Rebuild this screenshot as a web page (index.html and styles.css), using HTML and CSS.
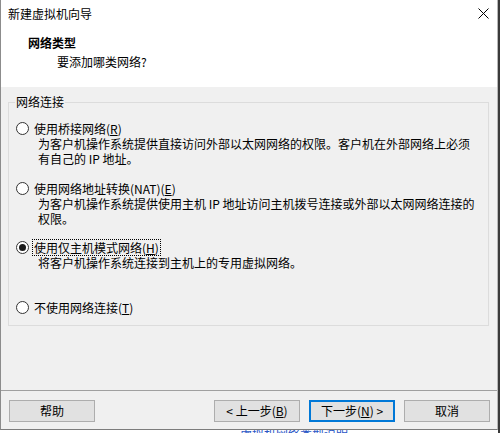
FILE: index.html
```html
<!DOCTYPE html>
<html lang="zh-CN">
<head>
<meta charset="utf-8">
<title>新建虚拟机向导</title>
<link rel="stylesheet" href="styles.css">
</head>
<body>
<div class="screen">
  <div class="main">
    <div class="window">
      <div class="titlebar">
        <span class="title">新建虚拟机向导</span>
        <svg class="close" width="11" height="11" viewBox="0 0 11 11"><path d="M0.5 0.5 L10.5 10.5 M10.5 0.5 L0.5 10.5" stroke="#000" stroke-width="1" fill="none"/></svg>
      </div>
      <div class="header">
        <div class="h-title">网络类型</div>
        <div class="h-sub">要添加哪类网络?</div>
      </div>
      <div class="content">
        <fieldset class="group">
          <legend>网络连接</legend>
          <div class="option opt1">
            <div class="opt-label"><span class="radio"></span><span class="text">使用桥接网络(<u>R</u>)</span></div>
            <div class="desc">为客户机操作系统提供直接访问外部以太网网络的权限。客户机在外部网络上必须<br>有自己的 IP 地址。</div>
          </div>
          <div class="option opt2">
            <div class="opt-label"><span class="radio"></span><span class="text">使用网络地址转换(NAT)(<u>E</u>)</span></div>
            <div class="desc">为客户机操作系统提供使用主机 IP 地址访问主机拨号连接或外部以太网网络连接的<br>权限。</div>
          </div>
          <div class="option opt3">
            <div class="opt-label"><span class="radio checked"></span><span class="text focused">使用仅主机模式网络(<u>H</u>)</span></div>
            <div class="desc">将客户机操作系统连接到主机上的专用虚拟网络。</div>
          </div>
          <div class="option opt4">
            <div class="opt-label"><span class="radio"></span><span class="text">不使用网络连接(<u>T</u>)</span></div>
          </div>
        </fieldset>
      </div>
      <div class="footer">
        <button class="btn">帮助</button>
        <div class="btn-group">
          <button class="btn">&lt; 上一步(<u>B</u>)</button>
          <button class="btn default">下一步(<u>N</u>) &gt;</button>
          <button class="btn">取消</button>
        </div>
      </div>
    </div>
    <div class="behind"><span class="link">虚拟机网络类型说明</span></div>
  </div>
  <div class="edge"></div>
</div>
</body>
</html>
```

FILE: styles.css
```css
* {
  box-sizing: border-box;
}

html, body {
  margin: 0;
  padding: 0;
}

body {
  width: 500px;
  height: 433px;
  overflow: hidden;
  font-family: "Noto Sans CJK SC", "Noto Sans", sans-serif;
  font-size: 12px;
  color: #000;
  background: #fff;
}

.screen {
  display: flex;
  width: 500px;
  height: 433px;
}

.main {
  width: 498px;
  display: flex;
  flex-direction: column;
}

.edge {
  width: 2px;
  background: #3a3a3a;
}

.window {
  height: 430px;
  display: flex;
  flex-direction: column;
  border-left: 1px solid #8c8c8c;
  border-right: 1px solid #b8b8b8;
  border-bottom: 1px solid #7c7c7c;
  background: #f0f0f0;
}

.titlebar {
  height: 30px;
  background: #fff;
  display: flex;
  align-items: flex-start;
  padding: 7px 8px 0 7px;
}

.title {
  line-height: 14px;
}

.close {
  margin-left: auto;
  margin-top: 1px;
}

.header {
  height: 57px;
  background: #fff;
  border-bottom: 1px solid #a0a0a0;
  padding: 5px 0 0 27px;
}

.h-title {
  font-weight: bold;
  line-height: 16px;
}

.h-sub {
  line-height: 16px;
  margin-top: 3px;
  margin-left: 29px;
}

.content {
  flex: 1;
  border-top: 1px solid #fff;
  margin-top: -1px;
}

.group {
  margin: 8px 8px 0 7px;
  padding: 12px 0 10px 7px;
  border: 1px solid #dcdcdc;
  min-width: 0;
}

.group legend {
  padding: 0 1px;
  margin-left: -1px;
  line-height: 14px;
}

.opt-label {
  display: flex;
  align-items: center;
  height: 15px;
  line-height: 15px;
  white-space: nowrap;
}

.radio {
  width: 13px;
  height: 13px;
  border: 1px solid #333;
  border-radius: 50%;
  background: #fff;
  margin-right: 4px;
  display: flex;
  align-items: center;
  justify-content: center;
  flex: none;
}

.radio.checked::after {
  content: "";
  width: 7px;
  height: 7px;
  border-radius: 50%;
  background: #1a1a1a;
}

.text {
  padding: 0 1px;
}

.text.focused {
  outline: 1px dotted #000;
  outline-offset: 0;
}

.desc {
  margin-left: 22px;
  line-height: 15px;
  white-space: nowrap;
}

.opt2 {
  margin-top: 15px;
}

.opt3 {
  margin-top: 14px;
}

.opt4 {
  margin-top: 30px;
}

u {
  text-decoration: underline;
  text-underline-offset: 1px;
}

.footer {
  height: 39px;
  border-top: 1px solid #a0a0a0;
  padding: 9px 7px 0 8px;
  display: flex;
  align-items: flex-start;
}

.btn-group {
  margin-left: auto;
  display: flex;
  gap: 9px;
}

.btn {
  width: 86px;
  height: 22px;
  padding: 0;
  border: 1px solid #adadad;
  background: #e1e1e1;
  font-family: "Noto Sans CJK SC", "Noto Sans", sans-serif;
  font-size: 12px;
  line-height: 18px;
  color: #000;
}

.btn.default {
  border: 1px solid #0078d7;
  box-shadow: inset 0 0 0 1px #0078d7;
}

.behind {
  height: 3px;
  overflow: hidden;
  background: #fff;
  padding-left: 240px;
}

.link {
  display: block;
  margin-top: -2px;
  line-height: 12px;
  color: #2a56c6;
  text-decoration: underline;
  font-size: 12px;
}
```
